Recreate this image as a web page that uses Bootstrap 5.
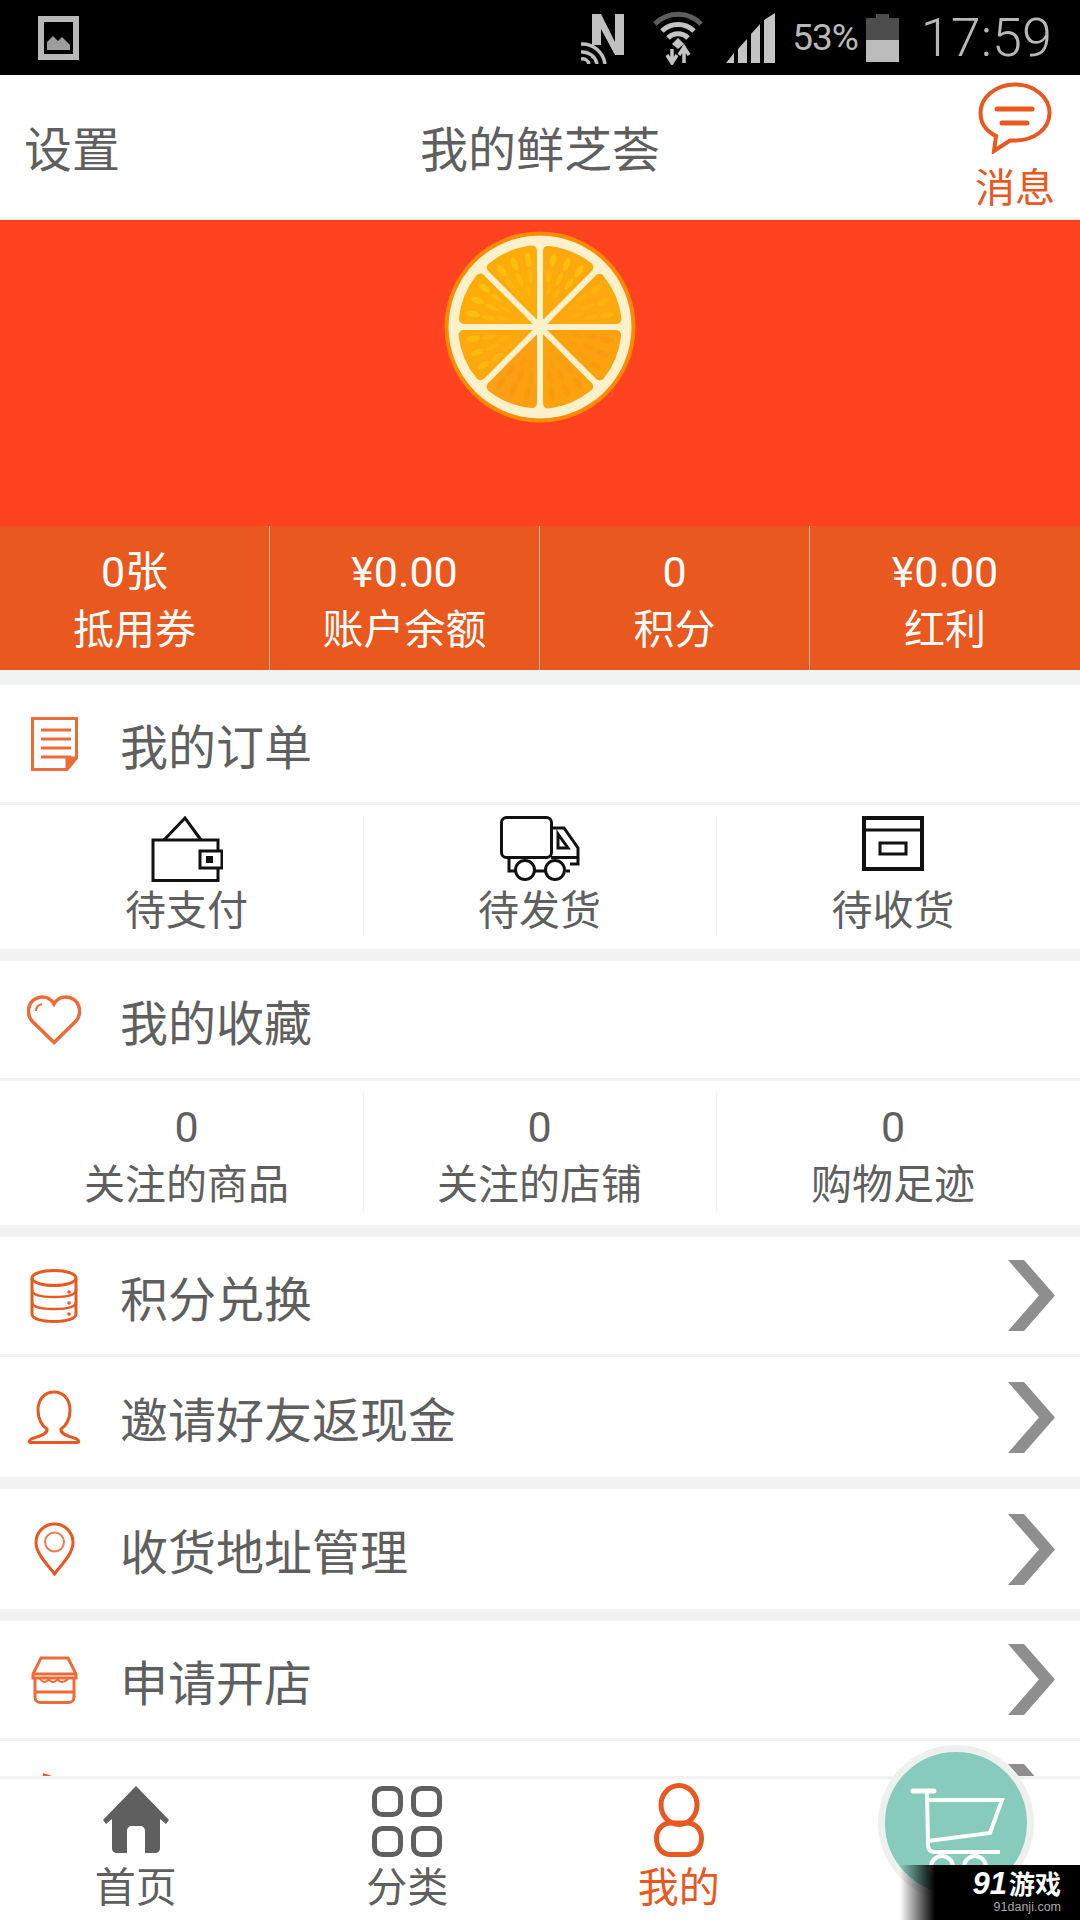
<!DOCTYPE html>
<html lang="zh-CN">
<head>
<meta charset="utf-8">
<title>我的鲜芝荟</title>
<link href="https://cdn.jsdelivr.net/npm/bootstrap@5.3.0/dist/css/bootstrap.min.css" rel="stylesheet">
<style>
html,body{width:1080px;height:1920px;overflow:hidden}
body{background:#f1f3f2;color:#5f5f5f;font-family:"Noto Sans CJK SC","Noto Sans",sans-serif;font-weight:400}
.app-shell{width:1080px;height:1920px}
.status-strip{height:75px;background:#000;color:#b8b8b8;font-family:Roboto,sans-serif}
.status-strip svg{flex:none}
.pic-ico{margin-left:38px}
.wifi-ico{margin-left:26px}
.sig-ico{margin-left:23px}
.pct{font-size:37px;margin:0 8px 0 16px;letter-spacing:-1px;line-height:1}
.clock{font-size:54px;font-weight:300;line-height:1;margin:0 28px 0 22px}
.top-head{height:142px;background:#fff;display:grid;grid-template-columns:1fr auto 1fr;align-items:center;margin-bottom:3px}
.top-title{font-size:48px;line-height:1}
.msg-box{width:80px;color:#e9581e;font-size:40px;line-height:1;margin-right:25px;padding-top:7px;align-self:start}
.msg-box svg{display:block;margin:0 auto 11px}
.hero{height:306px;background:#ff4320}
.fruit{margin-top:11px}
.wallet-strip{height:144px;background:#e9581e;color:#fff}
.wallet-cell{height:144px;border-right:1px solid #f5b79b;text-align:center;padding-top:22px}
.wallet-cell.last-cell{border-right:0}
.num{font-family:Roboto,"Noto Sans CJK SC",sans-serif;font-size:43px;line-height:48px}
.wallet-cell .lbl{font-size:41px;line-height:48px;margin-top:6px}
.scroll-zone{flex:1 1 0;min-height:0;overflow:hidden}
.menu-row{height:117px;background:#fff;font-size:48px;line-height:1}
.menu-row.tall{height:120px}
.icon-slot{width:108px;flex:none}
.menu-text{margin-left:12px}
.chev{margin-right:25px}
.hair{height:3px;background:#f1f3f2}
.spacer-a{height:15px}
.spacer-c{height:12px}
.tri-row{height:144px;background:#fff;padding:11px 10.5px 13px}
.tri-cell{height:120px;text-align:center;font-size:41px;line-height:48px;border-right:1px solid #efefef}
.tri-cell.last-cell{border-right:0}
.tri-cell svg{display:block;margin:0 auto}
.tri-cell .num{font-size:43px;line-height:48px;padding-top:11px}
.tri-cell .lbl{margin-top:6px}
.tri-cell .act-lbl{margin-top:1px}
.tab-zone{height:144px;background:#fff;border-top:3px solid #f1f3f2}
.tab-cell{flex:0 0 271.5px;width:271.5px;height:141px;text-align:center;font-size:41px;line-height:48px}
.tab-cell svg{display:block;margin:0 auto}
.tab-cell.on{color:#e9581e}
.tab-icon{height:79px;padding-top:7px;margin-bottom:2px}
.tab-icon.me-ico{padding-top:4px}
.cart-bubble{right:46px;bottom:19px;width:156px;height:156px;background:#86cbbb;border:7px solid #eef0ee;z-index:2}
.mark{right:0;bottom:0;width:180px;height:55px;background:linear-gradient(90deg,rgba(0,0,0,0) 0,#000 35px);z-index:3;color:#fff}
.mark-top{right:19px;top:6px;font-size:26px;line-height:24px;font-weight:700;white-space:nowrap}
.mark-top i{font-family:"Liberation Sans",sans-serif;font-size:31px;line-height:24px;margin-right:2px}
.mark-sub{right:19px;bottom:6px;font-family:"Liberation Sans",sans-serif;font-size:12.5px;line-height:14px;color:#a9a9a9}
</style>
</head>
<body>
<div class="app-shell d-flex flex-column position-relative overflow-hidden">

  <div class="status-strip d-flex align-items-center">
    <svg class="pic-ico" width="41" height="44" viewBox="0 0 41 44"><rect width="41" height="44" fill="#b8b8b8"/><rect x="6" y="6" width="29" height="32" fill="#000"/><path d="M9 34V26L15 20L20 25L24 21L32 29V34Z" fill="#9d9d9d"/></svg>
    <div class="flex-grow-1"></div>
    <svg width="46" height="52" viewBox="0 0 46 52"><path d="M11 2H20L34 30V2H43V43H34L20 17V33H11Z" fill="#c0c0c0"/><g fill="none" stroke="#c0c0c0" stroke-width="3.5"><path d="M0 32A23 23 0 0 1 24 52"/><path d="M0 40A15 15 0 0 1 16 52"/><path d="M0 47A7 7 0 0 1 8 52"/></g></svg>
    <svg class="wifi-ico" width="50" height="54" viewBox="0 0 50 54"><path d="M2 13A32 32 0 0 1 48 13" fill="none" stroke="#5d5d5d" stroke-width="5"/><path d="M9 20A23 23 0 0 1 41 20" fill="none" stroke="#c4c4c4" stroke-width="5"/><path d="M15 27A14 14 0 0 1 35 27" fill="none" stroke="#c4c4c4" stroke-width="5"/><path d="M25 27L31 33L25 38L19 33Z" fill="#c4c4c4"/><path d="M19 38V50M14 44L19 52L24 44M31 52V38M26 44L31 36L36 44" fill="none" stroke="#c4c4c4" stroke-width="3.5"/></svg>
    <svg class="sig-ico" width="50" height="50" viewBox="0 0 50 50"><path d="M0 50L8 40V50ZM12 36L21 26V50H12ZM25 21L34 11V50H25ZM38 7L49 0V50H38Z" fill="#c4c4c4"/></svg>
    <span class="pct">53%</span>
    <svg width="33" height="48" viewBox="0 0 33 48"><rect x="10" width="13" height="5" fill="#4d4d4d"/><rect y="4" width="33" height="22" fill="#4d4d4d"/><rect y="26" width="33" height="22" fill="#bcbcbc"/></svg>
    <span class="clock">17:59</span>
  </div>

  <div class="top-head">
    <div class="top-title ps-4">设置</div>
    <div class="top-title">我的鲜芝荟</div>
    <div class="d-flex justify-content-end align-self-start">
      <div class="msg-box text-center">
        <svg width="74" height="72" viewBox="0 0 74 72" fill="none" stroke="#e9581e"><path d="M37 2.500C56 2.500 71.500 15 71.500 31C71.500 47 56 58.500 37 58.500H32L16 69L18 54C8 49 2.500 41 2.500 31C2.500 15 18 2.500 37 2.500Z" stroke-width="4"/><path d="M19 27H54M24 41H49" stroke-width="5" stroke-linecap="round"/></svg>
        消息
      </div>
    </div>
  </div>

  <div class="hero d-flex justify-content-center align-items-start">
    <svg class="fruit" width="192" height="192" viewBox="-96 -96 192 192">
      <defs>
        <g id="seg">
          <path d="M8 -19.300L8 -76.100A76.500 76.500 0 0 1 48.400 -59.800Z" stroke-width="10" stroke-linejoin="round"/>
          <path d="M3 -7.240V-40H35.760Z" stroke="none"/>
        </g>
        <g id="drops">
          <ellipse rx="3" ry="7" opacity=".9" transform="rotate(11) translate(0 -68)"/>
          <ellipse rx="3" ry="7" opacity=".9" transform="rotate(23) translate(0 -68)"/>
          <ellipse rx="3" ry="7" opacity=".9" transform="rotate(35) translate(0 -68)"/>
          <ellipse rx="2.500" ry="7" opacity=".65" transform="rotate(10) translate(0 -52)"/>
          <ellipse rx="2.500" ry="7" opacity=".65" transform="rotate(22) translate(0 -52)"/>
          <ellipse rx="2.500" ry="7" opacity=".65" transform="rotate(34) translate(0 -52)"/>
          <ellipse rx="2" ry="6" opacity=".4" transform="rotate(13) translate(0 -38)"/>
          <ellipse rx="2" ry="6" opacity=".4" transform="rotate(27) translate(0 -38)"/>
        </g>
      </defs>
      <circle r="95.500" fill="#ff8a00"/>
      <circle r="91.500" fill="#fdf1cb"/>
      <use href="#seg" fill="#fda90d" stroke="#fda90d"/>
      <use href="#seg" fill="#fda90d" stroke="#fda90d" transform="rotate(45)"/>
      <use href="#seg" fill="#fca20f" stroke="#fca20f" transform="rotate(90)"/>
      <use href="#seg" fill="#fca20f" stroke="#fca20f" transform="rotate(135)"/>
      <use href="#seg" fill="#fd9f12" stroke="#fd9f12" transform="rotate(180)"/>
      <use href="#seg" fill="#fda90d" stroke="#fda90d" transform="rotate(225)"/>
      <use href="#seg" fill="#fdac0c" stroke="#fdac0c" transform="rotate(270)"/>
      <use href="#seg" fill="#fdac0c" stroke="#fdac0c" transform="rotate(315)"/>
      <use href="#drops" fill="#ffc20d"/>
      <use href="#drops" fill="#ffc20d" transform="rotate(315)"/>
      <use href="#drops" fill="#ffc20d" transform="rotate(270)"/>
      <use href="#drops" fill="#ffb90e" transform="rotate(225)"/>
      <use href="#drops" fill="#ffb40e" transform="rotate(45)"/>
      <use href="#drops" fill="#f79410" opacity=".5" transform="rotate(90)"/>
      <use href="#drops" fill="#f79410" opacity=".5" transform="rotate(135)"/>
      <use href="#drops" fill="#f79410" opacity=".5" transform="rotate(180)"/>
      <circle r="7" fill="#fdf1cb"/>
    </svg>
  </div>

  <div class="wallet-strip row g-0">
    <div class="col-3 wallet-cell"><div class="num">0张</div><div class="lbl">抵用券</div></div>
    <div class="col-3 wallet-cell"><div class="num">¥0.00</div><div class="lbl">账户余额</div></div>
    <div class="col-3 wallet-cell"><div class="num">0</div><div class="lbl">积分</div></div>
    <div class="col-3 wallet-cell last-cell"><div class="num">¥0.00</div><div class="lbl">红利</div></div>
  </div>

  <div class="scroll-zone">
    <div class="spacer-a"></div>

    <div class="menu-row d-flex align-items-center">
      <div class="icon-slot d-flex justify-content-center">
        <svg width="47" height="54" viewBox="0 0 47 54" fill="none" stroke="#ee6a37"><path d="M36 52.500H1.500V1.500H45.500V41L36 52.500V41H45.500" stroke-width="3"/><path d="M10 13H40M10 22H40M10 31H40M10 40H40" stroke-width="3"/><path d="M37 42H45L37 52Z" fill="#ee6a37" stroke="none"/></svg>
      </div>
      <span class="menu-text">我的订单</span>
    </div>
    <div class="hair"></div>
    <div class="tri-row row g-0">
      <div class="col-4 tri-cell">
        <svg width="72" height="66" viewBox="0 0 72 66" fill="none" stroke="#111" stroke-width="3"><path d="M2 24H67V64.500H2Z"/><path d="M13 24L34 2L50 24"/><path d="M49 35H71V52H49Z" fill="#fff"/><rect x="55" y="40" width="7" height="7" fill="#111" stroke="none"/></svg>
        <div class="act-lbl">待支付</div>
      </div>
      <div class="col-4 tri-cell">
        <svg width="80" height="66" viewBox="0 0 80 66" fill="none" stroke="#111" stroke-width="3"><rect x="1.500" y="1.500" width="50" height="40" rx="5"/><path d="M51 12H64L78 32V48H70M51 41.500H78M9 42V55H16M35 55H45M66 55H70M58 18L68 32H58Z"/><circle cx="25" cy="54" r="9.500"/><circle cx="55" cy="54" r="9.500"/></svg>
        <div class="act-lbl">待发货</div>
      </div>
      <div class="col-4 tri-cell last-cell">
        <svg width="62" height="66" viewBox="0 0 62 66" fill="none" stroke="#111"><rect x="2" y="2" width="58" height="51" stroke-width="4"/><path d="M2 14H60" stroke-width="3"/><rect x="18" y="27" width="26" height="11" stroke-width="3"/></svg>
        <div class="act-lbl">待收货</div>
      </div>
    </div>
    <div class="spacer-c"></div>

    <div class="menu-row d-flex align-items-center">
      <div class="icon-slot d-flex justify-content-center">
        <svg width="54" height="50" viewBox="0 0 54 50" fill="none" stroke="#ee6a37" stroke-width="3.500"><path d="M27 47.500L5 26C-1 19 1 8 8 4C15 0 23 2 27 9C31 2 39 0 46 4C53 8 55 19 49 26Z"/><path d="M9 16C9 12 11 10 15 9" stroke-width="2"/></svg>
      </div>
      <span class="menu-text">我的收藏</span>
    </div>
    <div class="hair"></div>
    <div class="tri-row row g-0">
      <div class="col-4 tri-cell"><div class="num">0</div><div class="lbl">关注的商品</div></div>
      <div class="col-4 tri-cell"><div class="num">0</div><div class="lbl">关注的店铺</div></div>
      <div class="col-4 tri-cell last-cell"><div class="num">0</div><div class="lbl">购物足迹</div></div>
    </div>
    <div class="spacer-c"></div>

    <div class="menu-row d-flex align-items-center">
      <div class="icon-slot d-flex justify-content-center">
        <svg width="48" height="54" viewBox="0 0 48 54" fill="none" stroke="#e9581e" stroke-width="3"><ellipse cx="24" cy="9" rx="22" ry="7.500"/><path d="M2 9V45C2 50 12 52.500 24 52.500C36 52.500 46 50 46 45V9"/><path d="M2 21C2 26 12 28 24 28C36 28 46 26 46 21M2 33C2 38 12 40 24 40C36 40 46 38 46 33" stroke-width="2.500"/><circle cx="39" cy="23" r="1.800" fill="#e9581e" stroke="none"/><circle cx="39" cy="34" r="1.800" fill="#e9581e" stroke="none"/><circle cx="39" cy="45" r="1.800" fill="#e9581e" stroke="none"/></svg>
      </div>
      <span class="menu-text">积分兑换</span>
      <svg class="ms-auto chev" width="47" height="71" viewBox="0 0 47 71"><path d="M0 0H16L47 35.500L16 71H0L31 35.500Z" fill="#8e8e8e"/></svg>
    </div>
    <div class="hair"></div>
    <div class="menu-row tall d-flex align-items-center">
      <div class="icon-slot d-flex justify-content-center">
        <svg width="54" height="54" viewBox="0 0 54 54" fill="none" stroke="#e9581e" stroke-width="3"><path d="M27 2C17 2 11 10 11 20C11 29 15 36 20 39C21 44 13 46 7 48C2 49 1.500 52.500 3 52.500H51C52.500 52.500 52 49 47 48C41 46 33 44 34 39C39 36 43 29 43 20C43 10 37 2 27 2Z"/></svg>
      </div>
      <span class="menu-text">邀请好友返现金</span>
      <svg class="ms-auto chev" width="47" height="71" viewBox="0 0 47 71"><path d="M0 0H16L47 35.500L16 71H0L31 35.500Z" fill="#8e8e8e"/></svg>
    </div>
    <div class="spacer-c"></div>

    <div class="menu-row tall d-flex align-items-center">
      <div class="icon-slot d-flex justify-content-center">
        <svg width="41" height="54" viewBox="0 0 41 54" fill="none" stroke="#e9581e" stroke-width="3"><path d="M20.500 52C14 43 2 32 2 20.500A18.500 18.500 0 0 1 39 20.500C39 32 27 43 20.500 52Z"/><circle cx="20.500" cy="20" r="9.500" stroke="#ee7d50" stroke-width="2"/></svg>
      </div>
      <span class="menu-text">收货地址管理</span>
      <svg class="ms-auto chev" width="47" height="71" viewBox="0 0 47 71"><path d="M0 0H16L47 35.500L16 71H0L31 35.500Z" fill="#8e8e8e"/></svg>
    </div>
    <div class="spacer-c"></div>

    <div class="menu-row d-flex align-items-center">
      <div class="icon-slot d-flex justify-content-center">
        <svg width="47" height="48" viewBox="0 0 47 48" fill="none" stroke="#ee6a37" stroke-width="3"><path d="M10 2H37L45 18V22H2V18Z"/><path d="M2 18H45M4 22V41C4 44 6 46.500 9 46.500H38C41 46.500 43 44 43 41V22M4 36H43"/><path d="M9 23C12 27 15 27 17.500 23C20 27 24 27 26.500 23C29 27 33 27 37 23" stroke-width="2"/></svg>
      </div>
      <span class="menu-text">申请开店</span>
      <svg class="ms-auto chev" width="47" height="71" viewBox="0 0 47 71"><path d="M0 0H16L47 35.500L16 71H0L31 35.500Z" fill="#8e8e8e"/></svg>
    </div>
    <div class="hair"></div>
    <div class="menu-row d-flex align-items-center">
      <div class="icon-slot d-flex justify-content-center">
        <svg width="54" height="54" viewBox="0 0 54 54"><path d="M16 0L34 6V54H16Z" fill="#ee5a2b"/></svg>
      </div>
      <svg class="ms-auto chev" width="47" height="71" viewBox="0 0 47 71"><path d="M0 0H16L47 35.500L16 71H0L31 35.500Z" fill="#8e8e8e"/></svg>
    </div>
  </div>

  <div class="tab-zone d-flex">
    <div class="tab-cell">
      <div class="tab-icon"><svg width="66" height="68" viewBox="0 0 66 68"><path d="M33 0L66 34L63 38L57 33V62C57 65 55 67 52 67H42V45C42 42 40 40 37 40H29C26 40 24 42 24 45V67H14C11 67 9 65 9 62V33L3 38L0 34Z" fill="#5f5f5f"/></svg></div>
      <div>首页</div>
    </div>
    <div class="tab-cell">
      <div class="tab-icon"><svg width="70" height="71" viewBox="0 0 70 71" fill="none" stroke="#5f5f5f" stroke-width="5"><rect x="2.500" y="2.500" width="26" height="26" rx="8"/><rect x="41.500" y="2.500" width="26" height="26" rx="8"/><rect x="2.500" y="42.500" width="26" height="26" rx="8"/><rect x="41.500" y="42.500" width="26" height="26" rx="8"/></svg></div>
      <div>分类</div>
    </div>
    <div class="tab-cell on">
      <div class="tab-icon me-ico"><svg width="50" height="74" viewBox="0 0 50 74" fill="none" stroke="#e9581e" stroke-width="5"><ellipse cx="25" cy="22" rx="18" ry="19.500"/><path d="M17 40H33C42 40 47.500 47 47.500 55C47.500 65 42 71.500 33 71.500H17C8 71.500 2.500 65 2.500 55C2.500 47 8 40 17 40Z"/></svg></div>
      <div>我的</div>
    </div>
  </div>

  <div class="cart-bubble position-absolute rounded-circle overflow-hidden">
    <svg width="142" height="142" viewBox="0 0 142 142" fill="none" stroke="#fff"><path d="M28 39H49" stroke-width="5" stroke-linecap="round"/><path d="M42 39L43 93C43 98 46 100 50 100H115" stroke-width="4"/><path d="M44 48H117L105 81L43 89" stroke-width="4"/><circle cx="57" cy="115" r="11" stroke-width="4"/><circle cx="90" cy="115" r="11" stroke-width="4"/></svg>
  </div>

  <div class="mark position-absolute">
    <div class="mark-top position-absolute"><i>91</i>游戏</div>
    <div class="mark-sub position-absolute">91danji.com</div>
  </div>
</div>
</body>
</html>
